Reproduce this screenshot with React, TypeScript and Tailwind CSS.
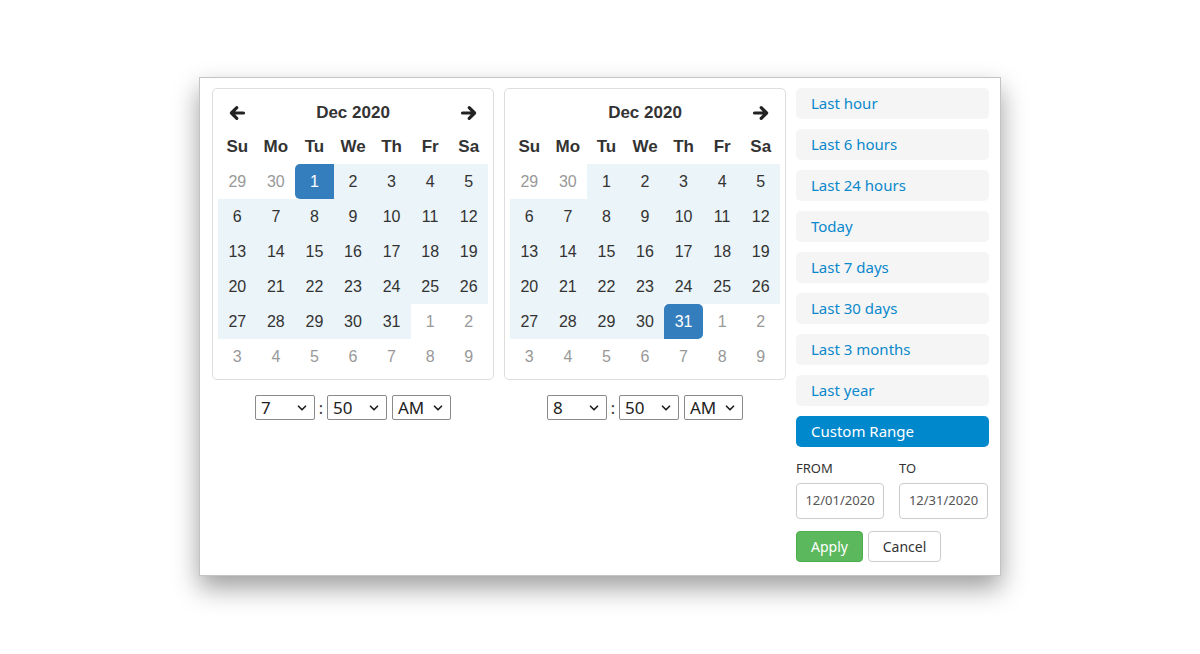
import { ChevronDown } from "lucide-react";

type Day = { n: number; muted?: boolean; inRange?: boolean; selected?: "start" | "end" };

function buildWeeks(kind: "left" | "right"): Day[][] {
  const days: Day[] = [];
  days.push({ n: 29, muted: true }, { n: 30, muted: true });
  for (let i = 1; i <= 31; i++) {
    const d: Day = { n: i, inRange: true };
    if (kind === "left" && i === 1) d.selected = "start";
    if (kind === "right" && i === 31) d.selected = "end";
    days.push(d);
  }
  for (let i = 1; i <= 9; i++) days.push({ n: i, muted: true });
  const weeks: Day[][] = [];
  for (let w = 0; w < 6; w++) weeks.push(days.slice(w * 7, w * 7 + 7));
  return weeks;
}

const dayNames = ["Su", "Mo", "Tu", "We", "Th", "Fr", "Sa"];

function Arrow({ dir }: { dir: "left" | "right" }) {
  return (
    <svg
      width="18"
      height="18"
      viewBox="0 0 18 18"
      className={["text-[#222]", dir === "left" ? "rotate-180" : ""].join(" ")}
    >
      <path
        d="M2.5 9H14M9.2 3.6 14.6 9l-5.4 5.4"
        fill="none"
        stroke="currentColor"
        strokeWidth="3.2"
        strokeLinecap="round"
        strokeLinejoin="round"
      />
    </svg>
  );
}

function Calendar({ kind }: { kind: "left" | "right" }) {
  const weeks = buildWeeks(kind);
  return (
    <div className="w-[282px] rounded-[5px] border border-[#dddddd] p-[5px] font-['Liberation_Sans',Arial,sans-serif] text-[16px] text-[#333]">
      <div className="grid h-[35px] grid-cols-7 items-center pt-[2px]">
        <div className="flex justify-center">{kind === "left" ? <Arrow dir="left" /> : null}</div>
        <div className="col-span-5 text-center text-[17px] font-bold">Dec 2020</div>
        <div className="flex justify-center">
          <Arrow dir="right" />
        </div>
      </div>
      <div className="grid h-[35px] grid-cols-7 items-center text-[17px] font-bold">
        {dayNames.map((d) => (
          <div key={d} className="text-center">
            {d}
          </div>
        ))}
      </div>
      {weeks.map((week, wi) => (
        <div key={wi} className="grid grid-cols-7">
          {week.map((d, di) => (
            <div
              key={di}
              className={[
                "flex h-[35px] items-center justify-center",
                d.selected
                  ? [
                      "bg-[#357ebd] text-white",
                      d.selected === "start" ? "rounded-l-[5px]" : "rounded-r-[5px] rounded-tl-[5px]",
                    ].join(" ")
                  : d.inRange
                    ? "bg-[#ebf4f8]"
                    : "",
                d.muted ? "text-[#999]" : "",
              ].join(" ")}
            >
              {d.n}
            </div>
          ))}
        </div>
      ))}
    </div>
  );
}

function TimeSelect({ value, width }: { value: string; width: string }) {
  return (
    <div className={["relative h-[25px]", width].join(" ")}>
      <select
        defaultValue={value}
        className="h-full w-full appearance-none rounded-[2px] border border-[#8a8a8a] bg-white pl-[5px] font-['Noto_Sans',sans-serif] text-[17px] leading-none text-[#222]"
      >
        <option>{value}</option>
      </select>
      <ChevronDown
        size={14}
        strokeWidth={3}
        className="pointer-events-none absolute right-[6px] top-[6px] text-[#222]"
      />
    </div>
  );
}

function TimePicker({ hour }: { hour: string }) {
  return (
    <div className="mt-[15px] flex items-center justify-center">
      <TimeSelect value={hour} width="w-[60px]" />
      <span className="w-[12px] text-center text-[16px] text-[#333]">:</span>
      <TimeSelect value="50" width="w-[60px]" />
      <div className="w-[5px]" />
      <TimeSelect value="AM" width="w-[59px]" />
    </div>
  );
}

const ranges = [
  "Last hour",
  "Last 6 hours",
  "Last 24 hours",
  "Today",
  "Last 7 days",
  "Last 30 days",
  "Last 3 months",
  "Last year",
];

export default function App() {
  return (
    <div className="flex h-[654px] w-[1200px] justify-center bg-white pt-[77px]">
      <div className="flex h-[499px] w-[802px] gap-[10px] border border-[#c4c4c4] bg-white pl-[12px] pr-[11px] pt-[10px] shadow-[0_12px_24px_rgba(0,0,0,0.38)]">
        <div className="flex flex-col">
          <Calendar kind="left" />
          <TimePicker hour="7" />
        </div>
        <div className="flex flex-col">
          <Calendar kind="right" />
          <TimePicker hour="8" />
        </div>
        <div className="flex w-[193px] flex-col font-['Noto_Sans',sans-serif]">
          <div className="flex flex-col gap-[10px]">
            {ranges.map((r) => (
              <div
                key={r}
                className="flex h-[31px] items-center rounded-[5px] bg-[#f5f5f5] px-[15px] text-[15px] text-[#0a88cc]"
              >
                {r}
              </div>
            ))}
            <div className="flex h-[31px] items-center rounded-[5px] bg-[#0088cc] px-[15px] text-[15px] text-white">
              Custom Range
            </div>
          </div>
          <div className="mt-[13px] flex gap-[15px]">
            <div className="flex w-[88px] flex-col">
              <span className="h-[17px] text-[13px] leading-[17px] text-[#333]">FROM</span>
              <div className="mt-[6px] flex h-[36px] items-center justify-center rounded-[4px] border border-[#cccccc] text-[13px] text-[#555]">
                12/01/2020
              </div>
            </div>
            <div className="flex w-[89px] flex-col">
              <span className="h-[17px] text-[13px] leading-[17px] text-[#333]">TO</span>
              <div className="mt-[6px] flex h-[36px] items-center justify-center rounded-[4px] border border-[#cccccc] text-[13px] text-[#555]">
                12/31/2020
              </div>
            </div>
          </div>
          <div className="mt-[12px] flex gap-[5px]">
            <div className="flex h-[31px] w-[67px] items-center justify-center rounded-[4px] border border-[#4cae4c] bg-[#5cb85c] text-[14px] text-white">
              Apply
            </div>
            <div className="flex h-[31px] w-[73px] items-center justify-center rounded-[4px] border border-[#cccccc] bg-white text-[14px] text-[#333]">
              Cancel
            </div>
          </div>
        </div>
      </div>
    </div>
  );
}
